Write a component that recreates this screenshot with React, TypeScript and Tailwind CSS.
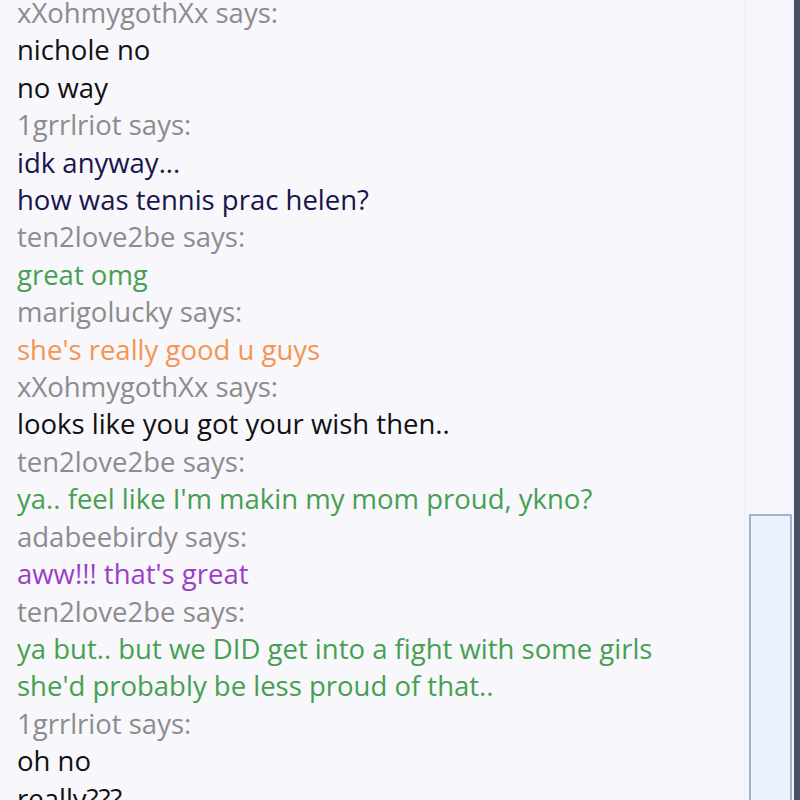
import React from "react";

type Line = { text: string; kind: "name" | "msg"; color?: string };

const lines: Line[] = [
  { text: "xXohmygothXx says:", kind: "name" },
  { text: "nichole no", kind: "msg", color: "text-[#111111]" },
  { text: "no way", kind: "msg", color: "text-[#111111]" },
  { text: "1grrlriot says:", kind: "name" },
  { text: "idk anyway...", kind: "msg", color: "text-[#17154a]" },
  { text: "how was tennis prac helen?", kind: "msg", color: "text-[#17154a]" },
  { text: "ten2love2be says:", kind: "name" },
  { text: "great omg", kind: "msg", color: "text-[#46a050]" },
  { text: "marigolucky says:", kind: "name" },
  { text: "she's really good u guys", kind: "msg", color: "text-[#f59550]" },
  { text: "xXohmygothXx says:", kind: "name" },
  { text: "looks like you got your wish then..", kind: "msg", color: "text-[#111111]" },
  { text: "ten2love2be says:", kind: "name" },
  { text: "ya.. feel like I'm makin my mom proud, ykno?", kind: "msg", color: "text-[#46a050]" },
  { text: "adabeebirdy says:", kind: "name" },
  { text: "aww!!! that's great", kind: "msg", color: "text-[#9a3fc4]" },
  { text: "ten2love2be says:", kind: "name" },
  { text: "ya but.. but we DID get into a fight with some girls", kind: "msg", color: "text-[#46a050]" },
  { text: "she'd probably be less proud of that..", kind: "msg", color: "text-[#46a050]" },
  { text: "1grrlriot says:", kind: "name" },
  { text: "oh no", kind: "msg", color: "text-[#111111]" },
  { text: "really???", kind: "msg", color: "text-[#111111]" },
];

function ChatLine({ line }: { line: Line }) {
  const color = line.kind === "name" ? "text-[#8c8c8c]" : line.color;
  return <div className={`whitespace-nowrap ${color}`}>{line.text}</div>;
}

export default function App() {
  return (
    <div className="flex h-[800px] w-[800px] overflow-hidden bg-[#f7f7fc]">
      {/* conversation log */}
      <div className="flex-1 overflow-hidden pl-[17px] font-['Open_Sans',sans-serif] text-[27.5px] leading-[37.4px]">
        <div className="-mt-[6px]">
          {lines.map((l, i) => (
            <ChatLine key={i} line={l} />
          ))}
        </div>
      </div>

      {/* scrollbar */}
      <div className="flex w-[50px] flex-col border-l border-[#eef0f6] bg-[#f4f6fc] pl-[4px] pr-[2px] pt-[514px]">
        <div className="flex-1 rounded-t-[2px] border-2 border-b-0 border-[#a6b0c8] bg-[#e9f2fd]" />
      </div>
      <div className="w-[6px] bg-[#4b5164]" />
    </div>
  );
}
